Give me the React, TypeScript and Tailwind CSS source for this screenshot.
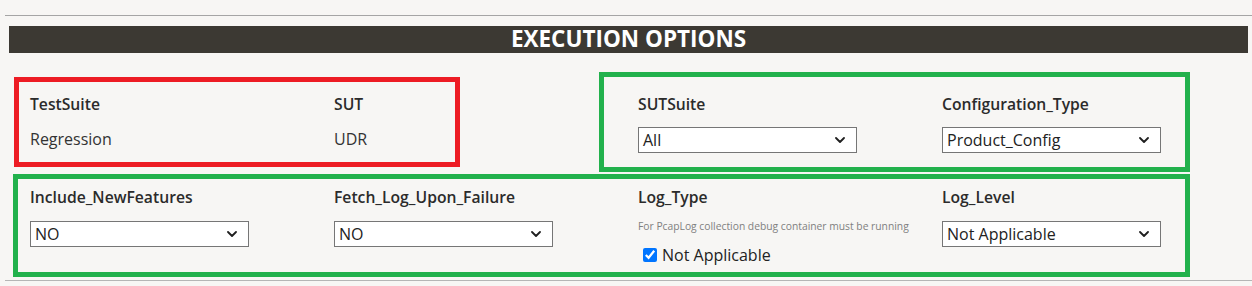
import React from "react";

const FONT = "font-['Open_Sans','Noto_Sans',sans-serif]";

function Chevron() {
  return (
    <svg width="10" height="6" viewBox="0 0 10 6" className="shrink-0" aria-hidden>
      <polyline points="1,1 5,5 9,1" fill="none" stroke="#1f1f1f" strokeWidth="1.8" strokeLinecap="round" strokeLinejoin="round" />
    </svg>
  );
}

function Select({ value }: { value: string }) {
  return (
    <div className="flex h-[26px] w-[219px] items-center justify-between border border-[#767676] bg-white pl-[4px] pr-[11px] text-[16px] text-[#222]">
      <span className="leading-none">{value}</span>
      <Chevron />
    </div>
  );
}

function Label({ children }: { children: React.ReactNode }) {
  return <div className="h-[20px] text-[15.7px] leading-[20px] font-semibold text-[#2b2b2b]">{children}</div>;
}

export default function App() {
  return (
    <div className={`h-[286px] w-[1252px] overflow-hidden bg-[#f7f6f4] pt-[15px] ${FONT}`}>
      <div className="ml-[5px] h-px bg-[#a5a5a5]" />

      {/* header bar */}
      <div className="mt-[10px] ml-[9px] mr-[4px] flex h-[27px] items-center justify-center bg-[#3c3933]">
        <span className="text-[22.5px] leading-none font-bold text-white">EXECUTION OPTIONS</span>
      </div>

      {/* row 1 */}
      <div className="flex items-start">
        <div className="mt-[24px] ml-[14px] grid h-[90px] w-[446px] grid-cols-[304px_1fr] border-[5px] border-[#ed1c24] pt-[12px] pl-[11px]">
          <div>
            <Label>TestSuite</Label>
            <div className="mt-[15px] text-[16px] leading-[20px] text-[#333]">Regression</div>
          </div>
          <div>
            <Label>SUT</Label>
            <div className="mt-[15px] text-[16px] leading-[20px] text-[#333]">UDR</div>
          </div>
        </div>

        <div className="mt-[19px] ml-[139px] grid h-[100px] w-[591px] grid-cols-[304px_1fr] border-[5px] border-[#22b14c] pt-[17px] pl-[34px]">
          <div>
            <Label>SUTSuite</Label>
            <div className="mt-[13px]">
              <Select value="All" />
            </div>
          </div>
          <div>
            <Label>Configuration_Type</Label>
            <div className="mt-[13px]">
              <Select value="Product_Config" />
            </div>
          </div>
        </div>
      </div>

      {/* row 2 */}
      <div className="mt-[2px] ml-[13px] grid h-[103px] w-[1177px] grid-cols-[304px_304px_304px_1fr] border-[5px] border-[#22b14c] pt-[8px] pl-[12px]">
        <div>
          <Label>Include_NewFeatures</Label>
          <div className="mt-[14px]">
            <Select value="NO" />
          </div>
        </div>
        <div>
          <Label>Fetch_Log_Upon_Failure</Label>
          <div className="mt-[14px]">
            <Select value="NO" />
          </div>
        </div>
        <div>
          <Label>Log_Type</Label>
          <div className="mt-[13px] text-[10.3px] leading-[12px] text-[#808080]">
            For PcapLog collection debug container must be running
          </div>
          <label className="mt-[13px] ml-[5px] flex items-center gap-[5px] text-[16px] leading-[20px] text-[#222]">
            <input type="checkbox" defaultChecked className="m-0 h-[14px] w-[14px] accent-[#0075ff]" />
            Not Applicable
          </label>
        </div>
        <div>
          <Label>Log_Level</Label>
          <div className="mt-[14px]">
            <Select value="Not Applicable" />
          </div>
        </div>
      </div>

      <div className="mt-[3px] ml-[5px] h-px bg-[#b5b5b5]" />
    </div>
  );
}
